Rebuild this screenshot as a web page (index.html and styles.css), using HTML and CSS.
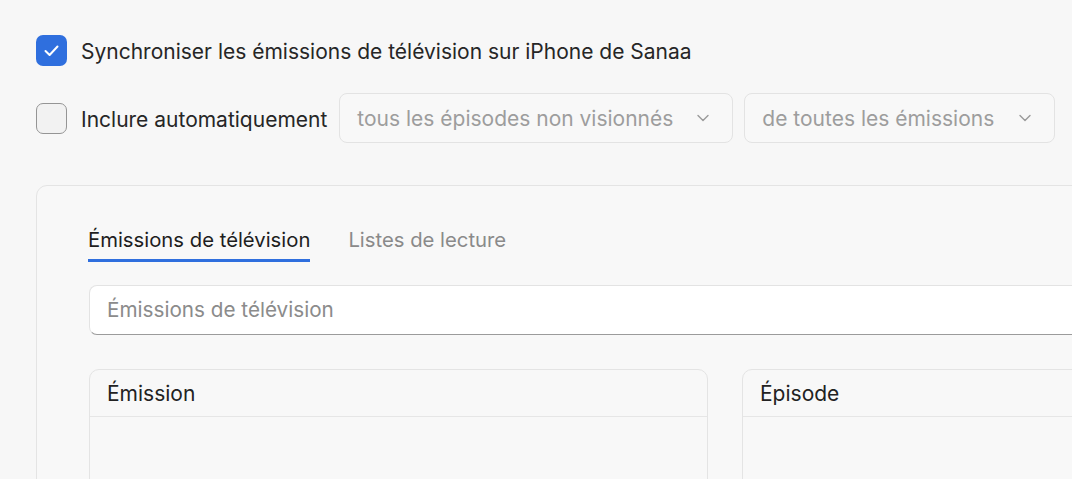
FILE: index.html
```html
<!DOCTYPE html>
<html lang="fr">
<head>
<meta charset="utf-8">
<link rel="stylesheet" href="styles.css">
</head>
<body>
<div class="page">
  <div class="row row-sync">
    <span class="check checked">
      <svg viewBox="0 0 31 31" width="31" height="31"><path d="M9.5 16 L13.6 20 L21.5 11.5" fill="none" stroke="#fff" stroke-width="2" stroke-linecap="round" stroke-linejoin="round"/></svg>
    </span>
    <span class="label">Synchroniser les émissions de télévision sur iPhone de Sanaa</span>
  </div>
  <div class="row row-auto">
    <span class="check"></span>
    <span class="label">Inclure automatiquement</span>
    <div class="select select-episodes">
      <span>tous les épisodes non visionnés</span>
      <svg class="chev" viewBox="0 0 12 8" width="12" height="8"><path d="M1 1.5 L6 6.5 L11 1.5" fill="none" stroke="#9a9a9a" stroke-width="1.4" stroke-linecap="round" stroke-linejoin="round"/></svg>
    </div>
    <div class="select select-shows">
      <span>de toutes les émissions</span>
      <svg class="chev" viewBox="0 0 12 8" width="12" height="8"><path d="M1 1.5 L6 6.5 L11 1.5" fill="none" stroke="#9a9a9a" stroke-width="1.4" stroke-linecap="round" stroke-linejoin="round"/></svg>
    </div>
  </div>
  <div class="panel">
    <div class="tabs">
      <span class="tab active">Émissions de télévision</span>
      <span class="tab">Listes de lecture</span>
    </div>
    <div class="search">Émissions de télévision</div>
    <div class="tables">
      <div class="table table-shows">
        <div class="thead">Émission</div>
        <div class="tbody"></div>
      </div>
      <div class="table table-episodes">
        <div class="thead">Épisode</div>
        <div class="tbody"></div>
      </div>
    </div>
  </div>
</div>
</body>
</html>
```
FILE: styles.css
```css
html, body {
  margin: 0;
  padding: 0;
  background: #f7f7f7;
  overflow: hidden;
  height: 100%;
}
body {
  font-family: "Inter", "Roboto", "Liberation Sans", sans-serif;
  font-size: 21px;
  color: #262626;
}
.page {
  padding: 35px 0 0 36px;
  width: 1120px;
}
.row {
  display: flex;
  align-items: center;
}
.row-sync {
  height: 31px;
}
.row-auto {
  margin-top: 27px;
  height: 50px;
}
.check {
  flex: 0 0 auto;
  width: 31px;
  height: 31px;
  box-sizing: border-box;
  border-radius: 7px;
  border: 1.5px solid #959595;
  background: #f2f2f2;
  display: flex;
  align-items: center;
  justify-content: center;
}
.check.checked {
  background: #2f6fde;
  border: none;
}
.check svg { display: block; }
.label {
  margin-left: 14px;
  margin-top: 3px;
  line-height: 24px;
  white-space: nowrap;
}
.select {
  box-sizing: border-box;
  height: 50px;
  border: 1px solid #e3e3e3;
  border-radius: 8px;
  background: #f8f8f8;
  color: #9d9d9d;
  display: flex;
  align-items: center;
  justify-content: space-between;
  padding: 0 23px 0 17px;
  white-space: nowrap;
}
.select-episodes {
  margin-left: 12px;
  width: 394px;
}
.select-shows {
  margin-left: 11px;
  width: 311px;
}
.chev { display: block; }
.panel {
  margin-top: 42px;
  border: 1px solid #e4e4e4;
  border-radius: 11px;
  background: #f8f8f8;
  padding: 0 0 40px 52px;
  height: 400px;
}
.tabs {
  display: flex;
  gap: 38px;
  margin-top: 42px;
  margin-left: -1px;
  font-size: 20.3px;
}
.tab {
  line-height: 24px;
  padding-bottom: 7px;
  border-bottom: 3px solid transparent;
  color: #8a8a8a;
  white-space: nowrap;
}
.tab.active {
  color: #1e1e1e;
  border-bottom-color: #2f6fde;
}
.search {
  margin-top: 23px;
  height: 50px;
  box-sizing: border-box;
  background: #ffffff;
  border: 1px solid #e3e3e3;
  border-bottom-color: #9b9b9b;
  border-radius: 8px;
  display: flex;
  align-items: center;
  padding: 0 0 2px 17px;
  color: #8b8b8b;
  font-size: 20.7px;
}
.tables {
  display: flex;
  gap: 34px;
  margin-top: 34px;
}
.table {
  border: 1px solid #e4e4e4;
  border-radius: 10px;
  background: #f8f8f8;
  height: 200px;
}
.table-shows { flex: 0 0 619px; box-sizing: border-box; }
.table-episodes { flex: 1 1 auto; }
.thead {
  height: 47px;
  box-sizing: border-box;
  border-bottom: 1px solid #e6e6e6;
  padding: 12px 0 0 17px;
  line-height: 24px;
  color: #222;
}
```
